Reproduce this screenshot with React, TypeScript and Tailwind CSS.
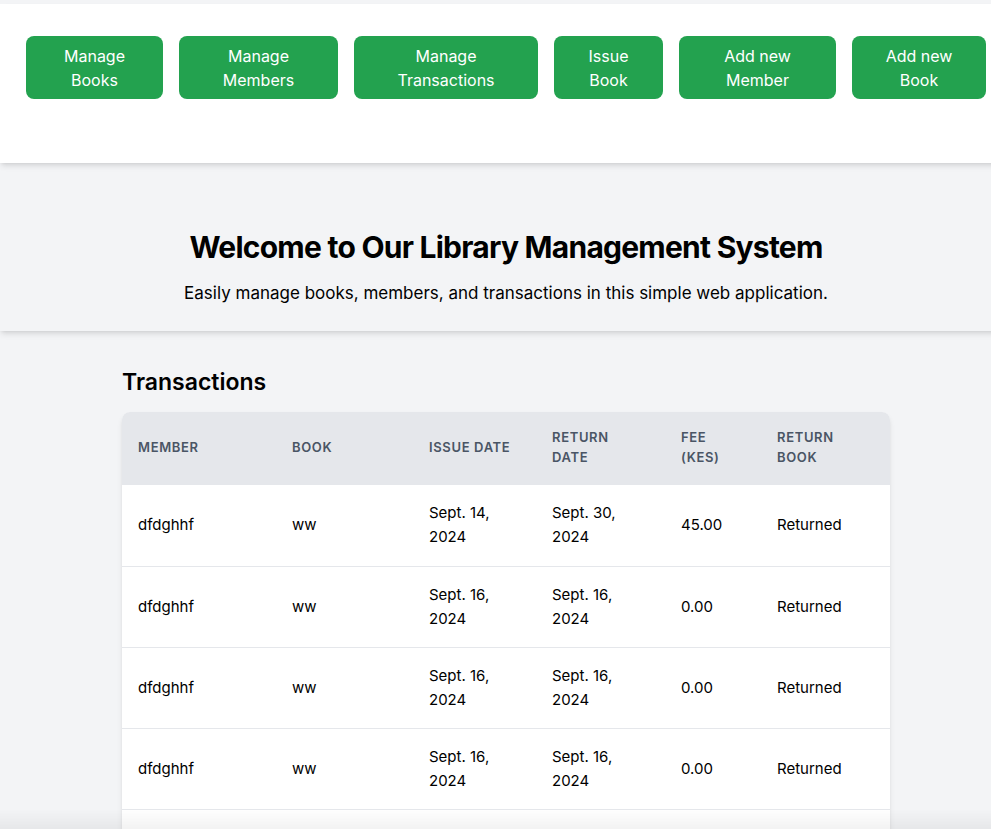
const buttons = [
  { first: 'Manage', second: 'Books', w: 'w-[137px]' },
  { first: 'Manage', second: 'Members', w: 'w-[159px]' },
  { first: 'Manage', second: 'Transactions', w: 'w-[184px]' },
  { first: 'Issue', second: 'Book', w: 'w-[109px]' },
  { first: 'Add new', second: 'Member', w: 'w-[157px]' },
  { first: 'Add new', second: 'Book', w: 'w-[134px]' },
]

const rows = [
  { member: 'dfdghhf', book: 'ww', issued: 'Sept. 14, 2024', returned: 'Sept. 30, 2024', fee: '45.00' },
  { member: 'dfdghhf', book: 'ww', issued: 'Sept. 16, 2024', returned: 'Sept. 16, 2024', fee: '0.00' },
  { member: 'dfdghhf', book: 'ww', issued: 'Sept. 16, 2024', returned: 'Sept. 16, 2024', fee: '0.00' },
  { member: 'dfdghhf', book: 'ww', issued: 'Sept. 16, 2024', returned: 'Sept. 16, 2024', fee: '0.00' },
  { member: 'dfdghhf', book: 'ww', issued: 'Sept. 16, 2024', returned: 'Sept. 16, 2024', fee: '0.00' },
]

function DateCell({ value }: { value: string }) {
  const [day, year] = value.split(', ')
  return (
    <td className="px-4">
      {day},<br />
      {year}
    </td>
  )
}

export default function App() {
  return (
    <div className="min-h-screen w-full overflow-hidden bg-gray-100 pt-1 font-['Inter',sans-serif] text-black">
      <div className="w-[1012px]">
        {/* nav */}
        <nav className="relative z-20 h-[159px] bg-white pt-8 shadow-md">
          <div className="flex gap-4 pl-[26px]">
            {buttons.map((b) => (
              <button key={b.first + b.second} className={`${b.w} h-[63px] rounded-lg bg-[#23a24f] px-4 text-center text-base leading-6 text-white`}>
                {b.first}
                <br />
                {b.second}
              </button>
            ))}
          </div>
        </nav>

        {/* hero */}
        <section className="relative z-10 flex h-[168px] flex-col items-center bg-gray-100 pt-[66px] shadow-md">
          <h1 className="text-[30px] font-bold leading-9 tracking-tight">Welcome to Our Library Management System</h1>
          <p className="mt-[16px] text-[17px] leading-6">Easily manage books, members, and transactions in this simple web application.</p>
        </section>

        {/* transactions */}
        <main className="mx-auto w-[768px] pt-[35px]">
          <h2 className="text-[23px] font-semibold leading-8">Transactions</h2>
          <div className="mt-[14px] overflow-hidden rounded-lg bg-white shadow-md">
            <table className="w-full table-fixed text-left">
              <colgroup>
                <col className="w-[154px]" />
                <col className="w-[137px]" />
                <col className="w-[123px]" />
                <col className="w-[129px]" />
                <col className="w-[96px]" />
                <col className="w-[129px]" />
              </colgroup>
              <thead className="bg-gray-200">
                <tr className="text-[13px] uppercase leading-5 tracking-wider text-gray-600">
                  <th className="h-[73px] px-4 pb-[3px] font-semibold">Member</th>
                  <th className="px-4 pb-[3px] font-semibold">Book</th>
                  <th className="px-4 pb-[3px] font-semibold">Issue Date</th>
                  <th className="px-4 pb-[3px] font-semibold">Return<br />Date</th>
                  <th className="px-4 pb-[3px] font-semibold">Fee<br />(KES)</th>
                  <th className="px-4 pb-[3px] font-semibold">Return<br />Book</th>
                </tr>
              </thead>
              <tbody className="text-[15px] leading-6">
                {rows.map((r, i) => (
                  <tr key={i} className="border-b border-gray-200">
                    <td className="h-[81px] px-4">{r.member}</td>
                    <td className="px-4">{r.book}</td>
                    <DateCell value={r.issued} />
                    <DateCell value={r.returned} />
                    <td className="px-4">{r.fee}</td>
                    <td className="px-4">Returned</td>
                  </tr>
                ))}
              </tbody>
            </table>
          </div>
        </main>
      </div>
      <div className="pointer-events-none fixed inset-x-0 bottom-0 h-5 bg-gradient-to-b from-transparent to-black/5" />
    </div>
  )
}
